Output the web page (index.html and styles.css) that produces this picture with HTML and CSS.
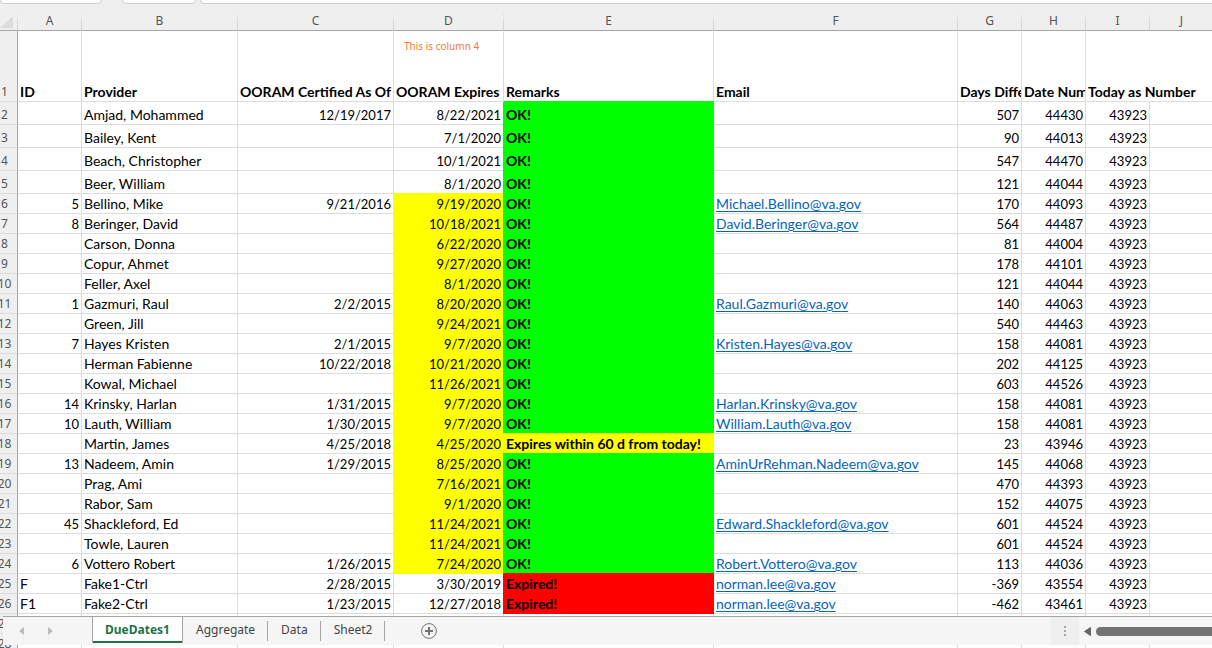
FILE: index.html
```html
<!DOCTYPE html>
<html lang="en">
<head>
<meta charset="utf-8">
<title>DueDates1</title>
<link rel="stylesheet" href="styles.css">
</head>
<body>
<div class="app">
  <div class="formula-bar">
    <div class="box name-box"></div>
    <div class="box fx-box"></div>
    <div class="box formula-box"></div>
  </div>
  <main class="sheet">
    <table class="grid">
      <colgroup>
        <col class="w-head"><col class="w-s"><col class="w-m"><col class="w-m"><col class="w-d"><col class="w-e"><col class="w-f"><col class="w-s"><col class="w-s"><col class="w-s"><col>
      </colgroup>
      <thead>
        <tr class="letters"><td class="corner"><svg width="13" height="12" viewBox="0 0 13 12" aria-hidden="true"><path d="M13 0v12H0z" fill="#dcdcdc"/></svg></td><th scope="col">A</th><th scope="col">B</th><th scope="col">C</th><th scope="col">D</th><th scope="col">E</th><th scope="col">F</th><th scope="col">G</th><th scope="col">H</th><th scope="col">I</th><th scope="col">J</th></tr>
      </thead>
      <tbody>
        <tr class="titles"><th scope="row">1</th><td>ID</td><td>Provider</td><td>OORAM Certified As Of</td><td class="noted"><span class="note">This is column 4</span>OORAM Expires</td><td>Remarks</td><td>Email</td><td>Days Difference</td><td>Date Number</td><td colspan="2">Today as Number</td></tr>
        <tr class="tall"><th scope="row">2</th><td></td><td>Amjad, Mohammed</td><td class="n">12/19/2017</td><td class="n">8/22/2021</td><td class="ok">OK!</td><td></td><td class="n">507</td><td class="n">44430</td><td class="n">43923</td><td></td></tr>
        <tr class="tall"><th scope="row">3</th><td></td><td>Bailey, Kent</td><td></td><td class="n">7/1/2020</td><td class="ok">OK!</td><td></td><td class="n">90</td><td class="n">44013</td><td class="n">43923</td><td></td></tr>
        <tr class="tall"><th scope="row">4</th><td></td><td>Beach, Christopher</td><td></td><td class="n">10/1/2021</td><td class="ok">OK!</td><td></td><td class="n">547</td><td class="n">44470</td><td class="n">43923</td><td></td></tr>
        <tr class="tall"><th scope="row">5</th><td></td><td>Beer, William</td><td></td><td class="n">8/1/2020</td><td class="ok">OK!</td><td></td><td class="n">121</td><td class="n">44044</td><td class="n">43923</td><td></td></tr>
        <tr><th scope="row">6</th><td class="n">5</td><td>Bellino, Mike</td><td class="n">9/21/2016</td><td class="n soon">9/19/2020</td><td class="ok">OK!</td><td><a href="mailto:Michael.Bellino@va.gov">Michael.Bellino@va.gov</a></td><td class="n">170</td><td class="n">44093</td><td class="n">43923</td><td></td></tr>
        <tr><th scope="row">7</th><td class="n">8</td><td>Beringer, David</td><td></td><td class="n soon">10/18/2021</td><td class="ok">OK!</td><td><a href="mailto:David.Beringer@va.gov">David.Beringer@va.gov</a></td><td class="n">564</td><td class="n">44487</td><td class="n">43923</td><td></td></tr>
        <tr><th scope="row">8</th><td></td><td>Carson, Donna</td><td></td><td class="n soon">6/22/2020</td><td class="ok">OK!</td><td></td><td class="n">81</td><td class="n">44004</td><td class="n">43923</td><td></td></tr>
        <tr><th scope="row">9</th><td></td><td>Copur, Ahmet</td><td></td><td class="n soon">9/27/2020</td><td class="ok">OK!</td><td></td><td class="n">178</td><td class="n">44101</td><td class="n">43923</td><td></td></tr>
        <tr><th scope="row">10</th><td></td><td>Feller, Axel</td><td></td><td class="n soon">8/1/2020</td><td class="ok">OK!</td><td></td><td class="n">121</td><td class="n">44044</td><td class="n">43923</td><td></td></tr>
        <tr><th scope="row">11</th><td class="n">1</td><td>Gazmuri, Raul</td><td class="n">2/2/2015</td><td class="n soon">8/20/2020</td><td class="ok">OK!</td><td><a href="mailto:Raul.Gazmuri@va.gov">Raul.Gazmuri@va.gov</a></td><td class="n">140</td><td class="n">44063</td><td class="n">43923</td><td></td></tr>
        <tr><th scope="row">12</th><td></td><td>Green, Jill</td><td></td><td class="n soon">9/24/2021</td><td class="ok">OK!</td><td></td><td class="n">540</td><td class="n">44463</td><td class="n">43923</td><td></td></tr>
        <tr><th scope="row">13</th><td class="n">7</td><td>Hayes Kristen</td><td class="n">2/1/2015</td><td class="n soon">9/7/2020</td><td class="ok">OK!</td><td><a href="mailto:Kristen.Hayes@va.gov">Kristen.Hayes@va.gov</a></td><td class="n">158</td><td class="n">44081</td><td class="n">43923</td><td></td></tr>
        <tr><th scope="row">14</th><td></td><td>Herman Fabienne</td><td class="n">10/22/2018</td><td class="n soon">10/21/2020</td><td class="ok">OK!</td><td></td><td class="n">202</td><td class="n">44125</td><td class="n">43923</td><td></td></tr>
        <tr><th scope="row">15</th><td></td><td>Kowal, Michael</td><td></td><td class="n soon">11/26/2021</td><td class="ok">OK!</td><td></td><td class="n">603</td><td class="n">44526</td><td class="n">43923</td><td></td></tr>
        <tr><th scope="row">16</th><td class="n">14</td><td>Krinsky, Harlan</td><td class="n">1/31/2015</td><td class="n soon">9/7/2020</td><td class="ok">OK!</td><td><a href="mailto:Harlan.Krinsky@va.gov">Harlan.Krinsky@va.gov</a></td><td class="n">158</td><td class="n">44081</td><td class="n">43923</td><td></td></tr>
        <tr><th scope="row">17</th><td class="n">10</td><td>Lauth, William</td><td class="n">1/30/2015</td><td class="n soon">9/7/2020</td><td class="ok">OK!</td><td><a href="mailto:William.Lauth@va.gov">William.Lauth@va.gov</a></td><td class="n">158</td><td class="n">44081</td><td class="n">43923</td><td></td></tr>
        <tr><th scope="row">18</th><td></td><td>Martin, James</td><td class="n">4/25/2018</td><td class="n soon">4/25/2020</td><td class="warn">Expires within 60 d from today!</td><td></td><td class="n">23</td><td class="n">43946</td><td class="n">43923</td><td></td></tr>
        <tr><th scope="row">19</th><td class="n">13</td><td>Nadeem, Amin</td><td class="n">1/29/2015</td><td class="n soon">8/25/2020</td><td class="ok">OK!</td><td><a href="mailto:AminUrRehman.Nadeem@va.gov">AminUrRehman.Nadeem@va.gov</a></td><td class="n">145</td><td class="n">44068</td><td class="n">43923</td><td></td></tr>
        <tr><th scope="row">20</th><td></td><td>Prag, Ami</td><td></td><td class="n soon">7/16/2021</td><td class="ok">OK!</td><td></td><td class="n">470</td><td class="n">44393</td><td class="n">43923</td><td></td></tr>
        <tr><th scope="row">21</th><td></td><td>Rabor, Sam</td><td></td><td class="n soon">9/1/2020</td><td class="ok">OK!</td><td></td><td class="n">152</td><td class="n">44075</td><td class="n">43923</td><td></td></tr>
        <tr><th scope="row">22</th><td class="n">45</td><td>Shackleford, Ed</td><td></td><td class="n soon">11/24/2021</td><td class="ok">OK!</td><td><a href="mailto:Edward.Shackleford@va.gov">Edward.Shackleford@va.gov</a></td><td class="n">601</td><td class="n">44524</td><td class="n">43923</td><td></td></tr>
        <tr><th scope="row">23</th><td></td><td>Towle, Lauren</td><td></td><td class="n soon">11/24/2021</td><td class="ok">OK!</td><td></td><td class="n">601</td><td class="n">44524</td><td class="n">43923</td><td></td></tr>
        <tr><th scope="row">24</th><td class="n">6</td><td>Vottero Robert</td><td class="n">1/26/2015</td><td class="n soon">7/24/2020</td><td class="ok">OK!</td><td><a href="mailto:Robert.Vottero@va.gov">Robert.Vottero@va.gov</a></td><td class="n">113</td><td class="n">44036</td><td class="n">43923</td><td></td></tr>
        <tr><th scope="row">25</th><td>F</td><td>Fake1-Ctrl</td><td class="n">2/28/2015</td><td class="n">3/30/2019</td><td class="expired">Expired!</td><td><a href="mailto:norman.lee@va.gov">norman.lee@va.gov</a></td><td class="n">-369</td><td class="n">43554</td><td class="n">43923</td><td></td></tr>
        <tr><th scope="row">26</th><td>F1</td><td>Fake2-Ctrl</td><td class="n">1/23/2015</td><td class="n">12/27/2018</td><td class="expired">Expired!</td><td><a href="mailto:norman.lee@va.gov">norman.lee@va.gov</a></td><td class="n">-462</td><td class="n">43461</td><td class="n">43923</td><td></td></tr>
        <tr><th scope="row">27</th><td></td><td></td><td></td><td></td><td></td><td></td><td></td><td></td><td></td><td></td></tr>
        <tr><th scope="row">28</th><td></td><td></td><td></td><td></td><td></td><td></td><td></td><td></td><td></td><td></td></tr>
      </tbody>
    </table>
  </main>
  <footer class="tab-bar">
    <div class="tab-nav">
      <button class="icon-btn" aria-label="Previous sheet"><svg width="5" height="8" viewBox="0 0 5 8"><path d="M5 0v8L0 4z" fill="#bdbdbd"/></svg></button>
      <button class="icon-btn" aria-label="Next sheet"><svg width="5" height="8" viewBox="0 0 5 8"><path d="M0 0v8l5-4z" fill="#bdbdbd"/></svg></button>
    </div>
    <nav class="tabs">
      <button class="tab active">DueDates1</button>
      <button class="tab">Aggregate</button>
      <button class="tab">Data</button>
      <button class="tab">Sheet2</button>
    </nav>
    <button class="icon-btn add" aria-label="New sheet"><svg width="16" height="16" viewBox="0 0 16 16" fill="none" stroke="#737373"><circle cx="8" cy="8" r="7.4"/><path d="M8 4v8M4 8h8" stroke-width="2"/></svg></button>
    <div class="grip"><svg width="2" height="10" viewBox="0 0 2 10" fill="#a6a6a6" aria-hidden="true"><path d="M0 0h2v2H0zM0 4h2v2H0zM0 8h2v2H0z"/></svg></div>
    <div class="scroll">
      <button class="icon-btn" aria-label="Scroll left"><svg width="7" height="9" viewBox="0 0 7 9"><path d="M6.500 .5v8L.5 4.500z" fill="#666" stroke="#666" stroke-linejoin="round"/></svg></button>
      <div class="thumb"></div>
    </div>
  </footer>
</div>
</body>
</html>
```

FILE: styles.css
```css
* { box-sizing: border-box; }

body {
  margin: 0;
  background: #fff;
  color: #000;
  font: 14px/18px Lato, sans-serif;
}

button {
  border: 0;
  padding: 0;
  background: none;
  color: inherit;
  font: inherit;
}

svg { display: block; }

.app {
  position: relative;
  display: flex;
  flex-direction: column;
  height: 100vh;
  overflow: hidden;
}

/* Formula bar */
.formula-bar {
  display: flex;
  flex: none;
  height: 12px;
  padding-bottom: 8px;
  background: #efefef;
}

.box {
  border: 1px solid #d0d0d0;
  border-top: 0;
  border-radius: 0 0 4px 4px;
  background: #fff;
}

.name-box { width: 102px; margin-right: 20px; }
.fx-box { width: 74px; margin-right: 4px; }
.formula-box { flex: 1; border-right: 0; border-bottom-right-radius: 0; }

/* Grid */
.sheet {
  flex: 1;
  min-height: 0;
  overflow: hidden;
}

.grid {
  width: calc(100% + 10px);
  margin-left: -8px;
  table-layout: fixed;
  border-collapse: separate;
  border-spacing: 0;
}

.w-head { width: 26px; }
.w-s { width: 64px; }
.w-m { width: 156px; }
.w-d { width: 110px; }
.w-e { width: 210px; }
.w-f { width: 244px; }

.grid th,
.grid td {
  height: 20px;
  padding: 0 2px;
  border-right: 1px solid #dcdcdc;
  border-bottom: 1px solid #dcdcdc;
  vertical-align: bottom;
  white-space: nowrap;
  overflow: hidden;
}

.grid th {
  padding: 0;
  background: #efefef;
  color: #555;
  font: 12px/18px "Noto Sans", sans-serif;
  text-align: center;
}

.grid th[scope="row"] { border-right-color: #a6a6a6; }

.grid .letters th,
.grid .letters td {
  height: 19px;
  border-bottom-color: #a6a6a6;
  border-right: 1px solid;
  border-image: linear-gradient(#efefef, #c8c8c8) 1;
  border-image-width: 0 1px 0 0;
  background: linear-gradient(#a6a6a6, #a6a6a6) bottom / 100% 1px no-repeat border-box #efefef;
}

.grid .corner svg { margin: 0 2px 2px auto; }

.grid .titles th,
.grid .titles td { height: 71px; }
.grid .titles td { font-weight: 700; }
.grid .tall th,
.grid .tall td { height: 23px; }

.grid .noted {
  position: relative;
  overflow: visible;
}

.note {
  position: absolute;
  top: 7px;
  left: 10px;
  color: #f4793b;
  font: 10px/16px "Noto Sans", sans-serif;
}

.grid .n {
  font-size: 13px;
  text-align: right;
}

.grid .ok,
.grid .warn,
.grid .expired {
  --fill: #0f0;
  font-weight: 700;
}

.grid .soon,
.grid .warn { --fill: #ff0; }
.grid .expired { --fill: #f00; }

/* Fills spread over the neighbouring grid lines */
.grid .ok,
.grid .warn,
.grid .expired,
.grid .soon {
  border-color: var(--fill);
  background: var(--fill);
  box-shadow: -1px -1px 0 var(--fill), 0 -1px 0 var(--fill), -1px 0 0 var(--fill);
}

.grid a {
  color: #0563c1;
  text-underline-offset: 2px;
}

/* Sheet tabs, laid over the last grid rows */
.tab-bar {
  position: absolute;
  right: 0;
  bottom: 3px;
  left: 3px;
  display: flex;
  height: 29px;
  border-top: 1px solid #a6a6a6;
  background: #f5f5f5;
  color: #444;
  font: 12px/26px "Noto Sans", sans-serif;
}

.icon-btn {
  display: flex;
  align-items: center;
  justify-content: center;
}

.tab-nav {
  display: flex;
  gap: 24px;
  width: 89px;
  height: 28px;
  padding-left: 16px;
}

.tabs {
  display: flex;
  align-items: flex-start;
}

.tab {
  position: relative;
  height: 26px;
  padding: 0 13px;
}

.tab:not(.active)::after {
  content: "";
  position: absolute;
  top: 4px;
  right: 0;
  height: 20px;
  border-right: 1px solid #a6a6a6;
}

.tab.active {
  padding: 0 12px;
  border: 1px solid #a6a6a6;
  border-width: 0 1px;
  background: #fff;
  box-shadow: inset 0 -2px #217346;
  color: #217346;
  font-weight: 700;
}

.add { height: 28px; margin-left: 36px; }

.grip {
  display: flex;
  align-items: center;
  justify-content: center;
  width: 28px;
  margin-left: auto;
  background: #efefef;
}

.scroll {
  display: flex;
  align-items: center;
  gap: 5px;
  width: 133px;
  padding-left: 5px;
}

.thumb {
  flex: 1;
  height: 9px;
  border-radius: 5px 0 0 5px;
  background: #737373;
}
```
